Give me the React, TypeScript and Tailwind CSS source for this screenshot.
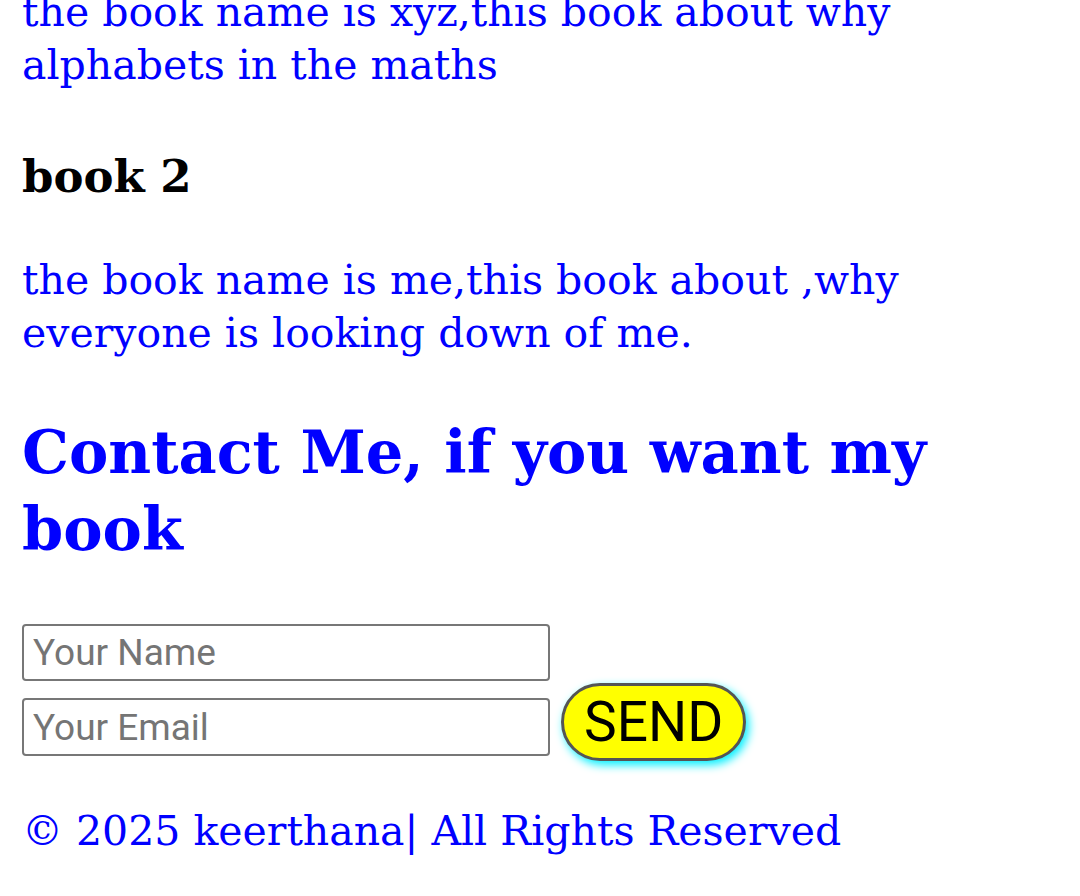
export default function App() {
  return (
    <div className="min-h-[896px] overflow-hidden bg-white px-[22px] font-['DejaVu_Serif',serif] text-[#0000ff]">
      <div className="-mt-[14px] flex flex-col">
        <p className="text-[41px] leading-[53px]">
          the book name is xyz,this book about why alphabets in the maths
        </p>
        <h3 className="mt-[58px] text-[45px] font-bold leading-[53px] text-black">book 2</h3>
        <p className="mt-[51px] text-[41px] leading-[53px]">
          the book name is me,this book about ,why everyone is looking down of me.
        </p>
        <h2 className="mt-[54px] w-[960px] text-[59px] font-bold leading-[77px]">
          Contact Me, if you want my book
        </h2>
        <form className="mt-[56px] flex items-end gap-[11px]" onSubmit={e => e.preventDefault()}>
          <div className="flex flex-col gap-[17px]">
            <input
              className="h-[57px] w-[528px] rounded-[4px] border-2 border-[#777] px-[9px] font-['Roboto',sans-serif] text-[37px] text-black placeholder:text-[#757575]"
              placeholder="Your Name"
            />
            <input
              className="h-[58px] w-[528px] rounded-[4px] border-2 border-[#777] px-[9px] font-['Roboto',sans-serif] text-[37px] text-black placeholder:text-[#757575]"
              placeholder="Your Email"
            />
          </div>
          <button
            type="submit"
            className="mb-[-5px] h-[78px] rounded-full border-[3px] border-[#555] bg-[#ffff00] px-[20px] font-['Roboto',sans-serif] text-[55px] leading-none text-black shadow-[3px_4px_10px_#00f0ff]"
          >
            SEND
          </button>
        </form>
        <p className="mt-[49px] text-[41px] leading-[53px]">© 2025 keerthana| All Rights Reserved</p>
      </div>
    </div>
  );
}
